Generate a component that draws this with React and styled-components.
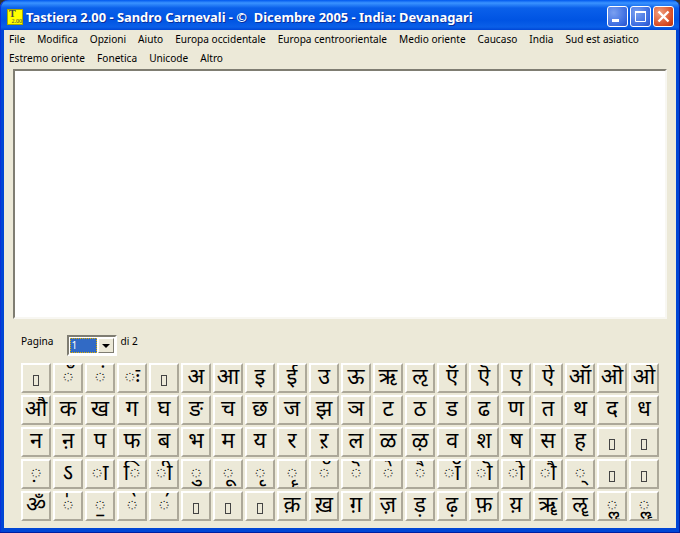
import React from 'react'
import styled, { createGlobalStyle } from 'styled-components'

const GlobalStyle = createGlobalStyle`
    html, body {
        margin: 0;
        padding: 0;
        background: #333;
    }
`
const Window = styled.div`
    width: 680px;
    height: 533px;
    box-sizing: border-box;
    display: flex;
    flex-direction: column;
    border-radius: 8px 8px 0 0;
    background: linear-gradient(180deg, #0058ee 0, #3a93ff 3px, #0a60ea 8px, #0054e3 20px, #0a5fe8 27px, #0046d5 30px);
    box-shadow: inset -1px -1px 0 #001ea0, inset 1px 0 0 #0831d9;
    font-family: "Noto Sans", "Liberation Sans", sans-serif;
`
const TitleBar = styled.div`
    height: 30px;
    flex: none;
    box-sizing: border-box;
    display: flex;
    align-items: center;
    padding: 3px 6px 0 7px;
`
const AppIcon = styled.div`
    width: 16px;
    height: 16px;
    flex: none;
    box-sizing: border-box;
    background: #ffff00;
    border: 1px solid #a8a800;
    color: #444;
    display: flex;
    flex-direction: column;
    overflow: hidden;
    font-family: "Liberation Serif", serif;
`
const IconLetter = styled.span`
    font-size: 10px;
    font-weight: bold;
    line-height: 8px;
    padding-left: 1px;
`
const IconVersion = styled.span`
    font-size: 6px;
    line-height: 6px;
    text-align: right;
`
const Title = styled.div`
    margin-left: 3px;
    flex: 1;
    color: #fff;
    font: bold 12.9px "Noto Sans", sans-serif;
    white-space: pre;
    text-shadow: 1px 1px 0 #0a2f9c;
`
const CaptionButtons = styled.div`
    display: flex;
    gap: 2px;
`
const CaptionButton = styled.div`
    width: 21px;
    height: 21px;
    box-sizing: border-box;
    border: 1px solid #fff;
    border-radius: 3px;
    background: ${(p) =>
        p.$close
            ? 'radial-gradient(circle at 30% 30%, #f0a080, #d84a22 70%, #b83010)'
            : 'radial-gradient(circle at 30% 30%, #7aa0f0, #3a6be0 70%, #2a50c8)'};
    display: flex;
    align-items: center;
    justify-content: center;
`
const Client = styled.div`
    flex: 1;
    margin: 0 4px 5px;
    background: #ece9d8;
    display: flex;
    flex-direction: column;
`
const MenuBar = styled.div`
    padding-left: 5px;
`
const MenuRow = styled.div`
    height: 19px;
    line-height: 18px;
    display: flex;
    gap: 12px;
`
const MenuItem = styled.span`
    font-size: 10.1px;
    color: #000;
    white-space: pre;
`
const TextBox = styled.textarea`
    display: block;
    width: 654px;
    height: 250px;
    box-sizing: border-box;
    margin: 1px 0 0 9px;
    background: #fff;
    border-style: solid;
    border-width: 2px;
    border-color: #7f7d72 #f8f7f2 #f8f7f2 #7f7d72;
    outline: none;
    resize: none;
`
const Pager = styled.div`
    display: flex;
    margin: 16px 0 0 17px;
    height: 21px;
    font-size: 10.1px;
    line-height: 13px;
    color: #000;
`
const PageCombo = styled.div`
    margin-left: 14px;
    width: 50px;
    height: 21px;
    box-sizing: border-box;
    display: flex;
    border-style: solid;
    border-width: 2px;
    border-color: #7f7d72 #fff #fff #7f7d72;
    background: #fff;
    padding: 1px;
`
const PageValue = styled.div`
    flex: 1;
    padding-left: 1px;
    background: #316ac5;
    color: #fff;
    font-size: 10.1px;
    line-height: 15px;
    outline: 1px dotted #e0b000;
    outline-offset: -1px;
`
const ComboArrow = styled.div`
    width: 16px;
    margin-left: 1px;
    box-sizing: border-box;
    background: #ece9d8;
    border: 1px solid;
    border-color: #fff #7f7d72 #7f7d72 #fff;
    display: flex;
    align-items: center;
    justify-content: center;
    &::after {
        content: '';
        border: 4px solid transparent;
        border-top: 4px solid #000;
        border-bottom: 0;
    }
`
const PageTotal = styled.span`
    margin-left: 3px;
`
const KeyGrid = styled.div`
    margin: 7px 0 0 17px;
    display: grid;
    grid-template-columns: repeat(20, 30px);
    grid-auto-rows: 30px;
    gap: 2px;
`
const Key = styled.button`
    box-sizing: border-box;
    padding: 0;
    margin: 0;
    background: #ece9d8;
    border-style: solid;
    border-width: 2px;
    border-color: #fff #aca899 #aca899 #fff;
    font: 22px "Noto Sans Devanagari", "Noto Sans", "DejaVu Sans", sans-serif;
    color: #000;
    display: flex;
    align-items: center;
    justify-content: center;
    overflow: hidden;
`
const MissingGlyph = styled.span`
    width: 6px;
    height: 11px;
    margin-top: 4px;
    box-sizing: border-box;
    border: 1px solid #444;
`

const MENU_ROWS = [
    ['File', 'Modifica', 'Opzioni', 'Aiuto', 'Europa occidentale', 'Europa centroorientale', 'Medio oriente', 'Caucaso', 'India', 'Sud est asiatico'],
    ['Estremo oriente', 'Fonetica', 'Unicode', 'Altro'],
]

// code points the original font had no glyph for
const MISSING = [0x900, 0x904, 0x93a, 0x93b, 0x94e, 0x94f, 0x955, 0x956, 0x957]
// vedic marks that need their dotted base spelled out
const NEEDS_BASE = [0x951, 0x952, 0x953, 0x954]

// 100 keys, in code point order from the start of the Devanagari block
const KEYS = Array.from({ length: 100 }, (_, i) => 0x900 + i)

function keyLabel(code) {
    if (MISSING.includes(code)) return <MissingGlyph />
    const ch = String.fromCodePoint(code)
    return NEEDS_BASE.includes(code) ? '\u25CC' + ch : ch
}

export default function App() {
    return (
        <Window>
            <GlobalStyle />
            <TitleBar>
                <AppIcon>
                    <IconLetter>T</IconLetter>
                    <IconVersion>2.00</IconVersion>
                </AppIcon>
                <Title>Tastiera 2.00 - Sandro Carnevali - ©  Dicembre 2005 - India: Devanagari</Title>
                <CaptionButtons>
                    <CaptionButton>
                        <svg width="19" height="19" viewBox="0 0 19 19">
                            <rect x="4" y="12" width="7" height="3" fill="#fff" />
                        </svg>
                    </CaptionButton>
                    <CaptionButton>
                        <svg width="19" height="19" viewBox="0 0 19 19">
                            <path d="M4.5 5.5h10v9h-10z" fill="none" stroke="#fff" />
                            <rect x="4" y="4" width="11" height="2" fill="#fff" />
                        </svg>
                    </CaptionButton>
                    <CaptionButton $close>
                        <svg width="19" height="19" viewBox="0 0 19 19">
                            <path d="M4.5 4.5l10 10M14.5 4.5l-10 10" stroke="#fff" strokeWidth="2.4" />
                        </svg>
                    </CaptionButton>
                </CaptionButtons>
            </TitleBar>
            <Client>
                <MenuBar>
                    {MENU_ROWS.map((row) => (
                        <MenuRow key={row[0]}>
                            {row.map((m) => (
                                <MenuItem key={m}>{m}</MenuItem>
                            ))}
                        </MenuRow>
                    ))}
                </MenuBar>
                <TextBox />
                <Pager>
                    Pagina
                    <PageCombo>
                        <PageValue>1</PageValue>
                        <ComboArrow />
                    </PageCombo>
                    <PageTotal>di 2</PageTotal>
                </Pager>
                <KeyGrid>
                    {KEYS.map((k) => (
                        <Key key={k}>{keyLabel(k)}</Key>
                    ))}
                </KeyGrid>
            </Client>
        </Window>
    )
}
